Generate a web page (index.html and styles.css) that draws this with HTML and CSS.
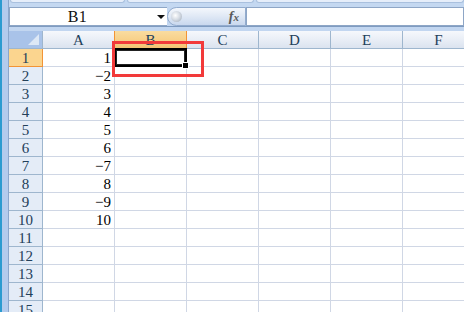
FILE: index.html
```html
<!DOCTYPE html>
<html>
<head>
<meta charset="utf-8">
<link rel="stylesheet" href="styles.css">
</head>
<body>
<div class="app">
  <div class="edge"></div>
  <div class="main">
    <div class="topbar">
      <div class="tab t1"></div>
      <div class="tab t2"></div>
      <div class="tab t3"></div>
    </div>
    <div class="fbar">
      <div class="namebox"><span class="name">B1</span><span class="arrow"></span></div>
      <div class="fxpill"><span class="knob"></span><span class="fx">f<i>x</i></span></div>
      <div class="finput"></div>
    </div>
    <div class="sep"></div>
    <div class="sheet">
      <div class="grid" id="grid"></div>
      <div class="selbox"><span class="handle"></span></div>
      <div class="redbox"></div>
    </div>
  </div>
</div>
<script>
  var g = document.getElementById('grid');
  var cols = ['A','B','C','D','E','F'];
  var vals = ['1','-2','3','4','5','6','-7','8','-9','10'];
  var h = '<div class="corner"><span class="tri"></span></div>';
  cols.forEach(function(c){ h += '<div class="ch' + (c==='B'?' sel':'') + '">' + c + '</div>'; });
  for (var r = 1; r <= 15; r++) {
    h += '<div class="rh' + (r===1?' sel':'') + '">' + r + '</div>';
    cols.forEach(function(c, i){
      var v = (i===0 && vals[r-1]) ? vals[r-1].replace('-', '\u2212') : '';
      h += '<div class="cell' + (i===0?' num':'') + '">' + v + '</div>';
    });
  }
  g.innerHTML = h;
</script>
</body>
</html>
```
FILE: styles.css
```css
html, body { margin: 0; padding: 0; }
body {
  width: 464px; height: 312px; overflow: hidden;
  background: #c2d6f0;
  font-family: "Liberation Serif", "DejaVu Serif", serif;
}
.app { display: flex; height: 312px; }
.edge {
  width: 9px; flex: none;
  background: linear-gradient(to right, #2b9bd0 0, #2b9bd0 2px, #b3cbed 2px, #b3cbed 8px, #8aa6cc 8px, #8aa6cc 9px);
}
.main { flex: 1; display: flex; flex-direction: column; min-width: 0; }

.topbar { height: 7px; display: flex; background: #c4d8f1; }
.tab {
  height: 2px; background: #e6eefa;
  border: 1px solid #a9c0de; border-top: none;
  border-radius: 0 0 3px 3px;
}
.t1 { width: 113px; margin-left: 1px; }
.t2 { width: 125px; margin-left: 2px; }
.t3 { flex: 1; margin-left: 2px; }

.fbar { height: 19px; display: flex; }
.namebox {
  width: 158px; box-sizing: border-box; height: 19px;
  background: #fff; border: 1px solid #8ea6c6; border-right: none;
  position: relative; display: flex; align-items: center; justify-content: center;
}
.name {
  font-size: 16px; color: #111; margin-left: -22px; letter-spacing: 0.5px;
}
.arrow {
  position: absolute; left: 147px; top: 7px;
  width: 0; height: 0;
  border-left: 4px solid transparent; border-right: 4px solid transparent;
  border-top: 4px solid #111;
}
.fxpill {
  width: 79px; height: 19px; box-sizing: border-box;
  border: 1px solid #93acce; border-radius: 10px 0 0 10px;
  background: linear-gradient(to bottom, #f4f7fc 0%, #dfe8f5 50%, #c9d8ee 100%);
  display: flex; align-items: center; justify-content: space-between;
  padding: 0 6px 0 3px;
}
.knob {
  width: 11px; height: 11px; border-radius: 50%;
  background: radial-gradient(circle at 40% 40%, #ffffff 0%, #d6dce4 45%, #9aa6b4 100%);
}
.fx {
  font-style: italic; font-size: 14px; color: #5a5a5a; font-weight: bold;
}
.fx i { font-size: 11px; }
.finput { flex: 1; height: 19px; box-sizing: border-box; background: #fff; border: 1px solid #8ea6c6; }

.sep { height: 5px; background: #c2d6f0; border-top: 1px solid #7f9bc0; box-sizing: border-box; }

.sheet { position: relative; flex: 1; overflow: hidden; background: #fff; }
.grid {
  display: grid;
  grid-template-columns: 34px repeat(6, 72px);
  grid-auto-rows: 18px;
  font-size: 15px;
}
.corner {
  background: #a9c3e9; border-right: 1px solid #9eb6ce; border-bottom: 1px solid #9eb6ce;
  position: relative;
}
.tri {
  position: absolute; right: 3px; bottom: 3px; width: 0; height: 0;
  border-left: 11px solid transparent; border-bottom: 11px solid #dde8f6;
}
.ch {
  background: linear-gradient(to bottom, #f6f8fc 0%, #e9eef6 50%, #dbe3ef 100%);
  border-right: 1px solid #9eb6ce; border-bottom: 1px solid #9eb6ce;
  display: flex; align-items: center; justify-content: center;
  color: #23405a; padding-top: 1px;
}
.ch.sel {
  background: linear-gradient(to bottom, #f9dca0 0%, #f7cf86 60%, #f3c272 100%);
  border-right-color: #f29436; border-left: 1px solid #f29436; margin-left: -1px;
}
.rh {
  background: #e4ecf7; border-right: 1px solid #9eb6ce; border-bottom: 1px solid #9eb6ce;
  display: flex; align-items: center; justify-content: center;
  color: #23405a; box-sizing: border-box; padding-top: 1px;
}
.rh.sel { background: #fbd58f; border-right-color: #f29436; border-bottom-color: #f29436; }
.cell {
  border-right: 1px solid #d0d7e5; border-bottom: 1px solid #d0d7e5;
  display: flex; align-items: center; justify-content: flex-end;
  padding-right: 3px; color: #000; padding-top: 1px;
}
.selbox {
  position: absolute; left: 105px; top: 17px; width: 73px; height: 19px;
  box-sizing: border-box; border: 2px solid #000;
  box-shadow: inset 0 0 0 1px #222;
}
.handle {
  position: absolute; right: -4px; bottom: -4px; width: 5px; height: 5px;
  background: #000; border: 1px solid #fff;
}
.redbox {
  position: absolute; left: 103px; top: 10px; width: 92px; height: 36px;
  box-sizing: border-box; border: 3px solid #f23a3a;
}
```
